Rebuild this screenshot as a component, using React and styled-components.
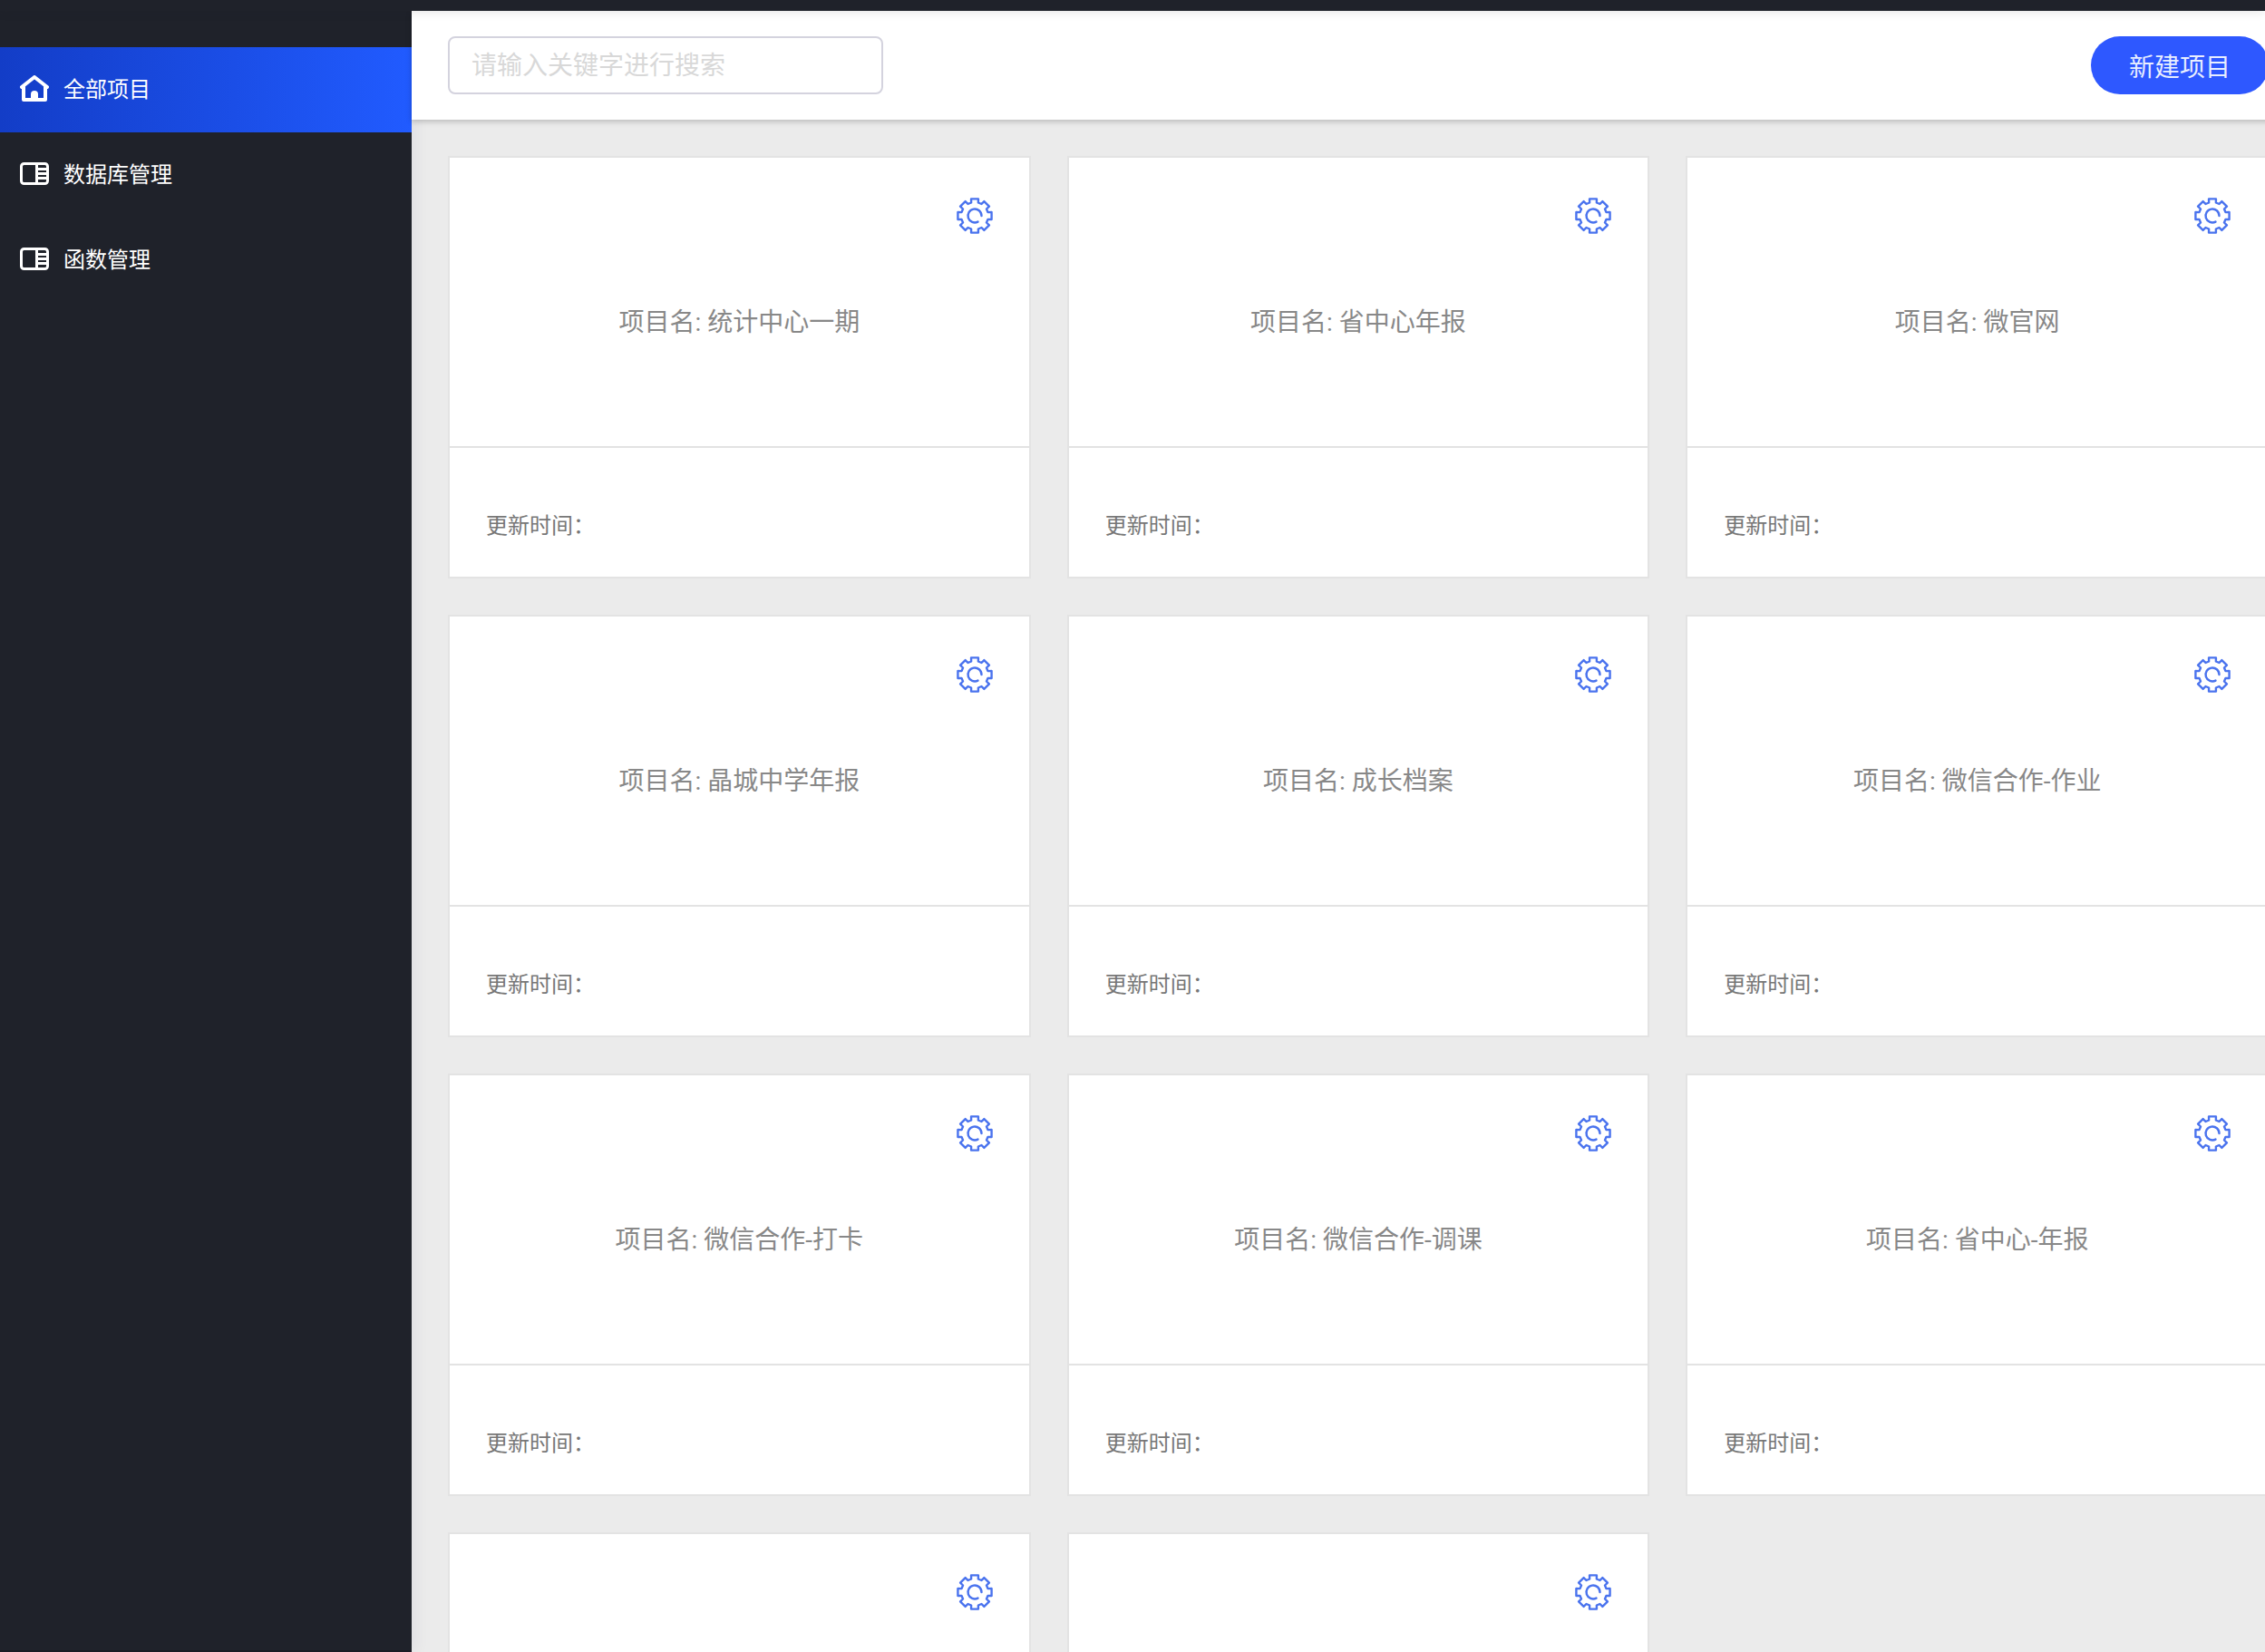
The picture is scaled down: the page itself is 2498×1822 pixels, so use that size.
import React from 'react';
import styled, { createGlobalStyle } from 'styled-components';

const GlobalStyle = createGlobalStyle`
  *, *::before, *::after { box-sizing: border-box; }
  html, body { margin: 0; background: #ebebeb; }
  body {
    overflow: hidden;
    font-family: Roboto, "Noto Sans CJK SC", sans-serif;
    font-size: 24px;
  }
  button, input { font-family: inherit; }
`;

const Page = styled.div`
  display: flex;
  flex-direction: column;
  height: 100vh;
  overflow: hidden;
`;

const TopBar = styled.div`
  flex: none;
  height: 12px;
  background: #1f222a;
  box-shadow: 0 0 12px rgba(31, 34, 42, 0.15);
  z-index: 2;
`;

const Body = styled.div`
  display: flex;
  flex: 1;
  min-height: 0;
`;

const Sidebar = styled.nav`
  flex: none;
  width: 454px;
  padding-top: 40px;
  background: #1f222a;
  border-bottom: 2px solid #1c1a26;
  box-shadow: 4px 0 16px rgba(0, 21, 81, 0.06);
`;

const NavLink = styled.a`
  display: flex;
  align-items: center;
  gap: 16px;
  height: 94px;
  padding: 0 22px;
  color: #fff;
  font-size: 24px;
  line-height: 32px;
  text-decoration: none;
  background: ${(p) => (p.$active ? 'linear-gradient(90deg, #133dc7, #215bff)' : 'none')};

  svg { display: block; flex: none; }
`;

const Main = styled.main`
  flex: 1;
  min-width: 2088px;
`;

const Header = styled.header`
  display: flex;
  justify-content: space-between;
  align-items: center;
  height: 120px;
  padding: 0 40px;
  background: #fff;
  box-shadow: 0 2px 6px rgba(0, 0, 0, 0.22);
`;

const SearchInput = styled.input`
  width: 480px;
  height: 64px;
  padding: 0 24px;
  border: 2px solid #d4d3de;
  border-radius: 8px;
  outline: none;
  color: #555;
  background: #fff;
  font-size: 28px;

  &::placeholder { color: #d8d8d8; opacity: 1; }
`;

const CreateButton = styled.button`
  height: 64px;
  padding: 0 42px;
  border: 0;
  border-radius: 32px;
  color: #e8eeff;
  background: #2e58ff;
  font-size: 28px;
  cursor: pointer;
`;

const Grid = styled.div`
  display: grid;
  grid-template-columns: repeat(3, minmax(0, 1fr));
  gap: 40px;
  padding: 40px;
`;

const Card = styled.article`
  background: #fff;
  border: 2px solid #e3e3e3;
`;

const CardTop = styled.div`
  display: flex;
  flex-direction: column;
  height: 320px;
  padding: 44px 40px;
  border-bottom: 2px solid #e3e3e3;
`;

const SettingsButton = styled.button`
  align-self: flex-end;
  padding: 0;
  border: 0;
  color: #4a73ee;
  background: none;
  cursor: pointer;

  svg { display: block; }
`;

const CardTitle = styled.h2`
  margin: 78px 0 0;
  color: #888;
  font-size: 28px;
  font-weight: 400;
  line-height: 40px;
  text-align: center;
`;

const CardFooter = styled.div`
  height: 142px;
  padding: 70px 40px 0;
  color: #777;
  font-size: 24px;
  line-height: 32px;
`;

function HomeIcon() {
  return (
    <svg width="32" height="32" viewBox="0 0 32 32" fill="none" stroke="currentColor" strokeWidth="4" strokeLinejoin="round" strokeLinecap="round" aria-hidden="true">
      <path d="M2 13 16 2l14 11" />
      <path d="M4 13v14h24V13" />
      <path d="M12 28v-7a4 4 0 0 1 8 0v7z" fill="currentColor" stroke="none" />
    </svg>
  );
}

function PanelIcon() {
  return (
    <svg width="32" height="32" viewBox="0 0 32 32" fill="none" stroke="currentColor" strokeWidth="3" aria-hidden="true">
      <rect x="1.5" y="3.5" width="29" height="22" rx="3" />
      <path d="M18.5 3v23M19 9.500h11M19 14.500h11M19 19.500h11" />
    </svg>
  );
}

// Outline of an eight-tooth gear centred on (20, 20).
const gearPath = (() => {
  const points = [];
  for (let i = 0; i < 8; i += 1) {
    const mid = i * 45 - 90;
    [[-15, 15], [-12, 19], [12, 19], [15, 15]].forEach(([offset, radius]) => {
      const angle = ((mid + offset) * Math.PI) / 180;
      points.push(`${(20 + radius * Math.cos(angle)).toFixed(2)} ${(20 + radius * Math.sin(angle)).toFixed(2)}`);
    });
  }
  return `M${points.join('L')}Z`;
})();

function GearIcon() {
  return (
    <svg width="40" height="40" viewBox="0 0 40 40" fill="none" stroke="currentColor" strokeWidth="2.4" strokeLinejoin="round" strokeLinecap="round" aria-hidden="true">
      <path d={gearPath} />
      <path d="M27.5 20A7.5 7.5 0 1 0 23.5 26.600" />
    </svg>
  );
}

const navItems = [
  { label: '全部项目', Icon: HomeIcon, active: true },
  { label: '数据库管理', Icon: PanelIcon },
  { label: '函数管理', Icon: PanelIcon },
];

const projects = [
  '统计中心一期',
  '省中心年报',
  '微官网',
  '晶城中学年报',
  '成长档案',
  '微信合作-作业',
  '微信合作-打卡',
  '微信合作-调课',
  '省中心-年报',
  '',
  '',
];

export default function App() {
  return (
    <Page>
      <GlobalStyle />
      <TopBar />
      <Body>
        <Sidebar>
          {navItems.map(({ label, Icon, active }) => (
            <NavLink key={label} href="#" $active={active} aria-current={active ? 'page' : undefined}>
              <Icon />
              {label}
            </NavLink>
          ))}
        </Sidebar>
        <Main>
          <Header>
            <SearchInput type="text" placeholder="请输入关键字进行搜索" aria-label="请输入关键字进行搜索" />
            <CreateButton type="button">新建项目</CreateButton>
          </Header>
          <Grid>
            {projects.map((name, index) => (
              <Card key={index}>
                <CardTop>
                  <SettingsButton type="button">
                    <GearIcon />
                  </SettingsButton>
                  {name && <CardTitle>项目名: {name}</CardTitle>}
                </CardTop>
                {name && <CardFooter>更新时间：</CardFooter>}
              </Card>
            ))}
          </Grid>
        </Main>
      </Body>
    </Page>
  );
}
